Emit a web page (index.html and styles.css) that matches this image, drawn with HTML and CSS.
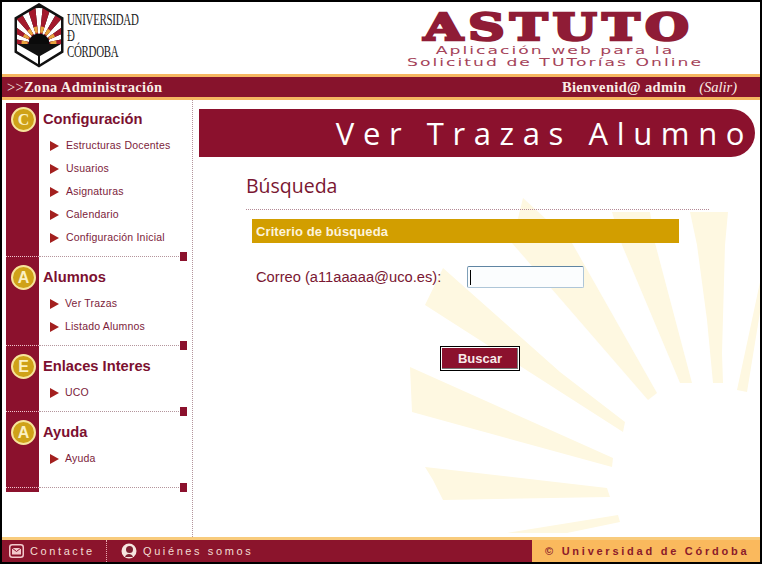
FILE: index.html
```html
<!DOCTYPE html>
<html lang="es">
<head>
<meta charset="utf-8">
<title>ASTUTO - Ver Trazas Alumno</title>
<link rel="stylesheet" href="styles.css">
</head>
<body>
<div class="frame">
  <header class="masthead">
    <div class="uni">
      <svg class="shield" width="50" height="68" viewBox="14 2 50 68" aria-hidden="true">
        <defs><clipPath id="fan"><path d="M39 6L61 19V44L39 44L17 44V19Z"/></clipPath></defs>
        <path d="M39 3L63.500 17.500V52.500L39 67.500L14.500 52.500V17.500Z" fill="#111"/>
        <g clip-path="url(#fan)">
          <circle cx="39" cy="44" r="22" fill="none" stroke="#fff" stroke-width="28" pathLength="120" stroke-dasharray="4 4"/>
          <circle cx="39" cy="44" r="22" fill="none" stroke="#a3192c" stroke-width="28" pathLength="120" stroke-dasharray="4 4" stroke-dashoffset="-4"/>
          <circle cx="39" cy="44" r="14.500" fill="none" stroke="#e8a43c" stroke-width="6" pathLength="120" stroke-dasharray="4 4" stroke-dashoffset="-4"/>
          <circle cx="39" cy="44" r="10.500" fill="#0a0a0a"/>
        </g>
        <path d="M17 44L38 56V64L17 51Z M61 44L40 56V64L61 51Z" fill="#fff"/>
      </svg>
      <div class="uni-name"><span>UNIVERSIDAD</span><span>Ð</span><span>CÓRDOBA</span></div>
    </div>
    <div class="brand">
      <div class="brand-name">ASTUTO</div>
      <div class="brand-sub">Aplicación web para la</div>
      <div class="brand-sub">Solicitud de TUTorías Online</div>
    </div>
  </header>

  <div class="topbar">
    <div class="zone"><span class="zone-mark">&gt;&gt;</span>Zona Administración</div>
    <div class="welcome"><b>Bienvenid@ admin</b><a class="logout" href="#">(Salir)</a></div>
  </div>

  <div class="body">
    <nav class="sidebar">
      <section class="sec first">
        <div class="strip"><span class="badge badge-c">C</span></div>
        <div class="sec-body">
          <h3>Configuración</h3>
          <ul>
            <li>Estructuras Docentes</li>
            <li>Usuarios</li>
            <li>Asignaturas</li>
            <li>Calendario</li>
            <li>Configuración Inicial</li>
          </ul>
        </div>
        <i class="sq"></i>
      </section>
      <section class="sec">
        <div class="strip"><span class="badge">A</span></div>
        <div class="sec-body tight">
          <h3>Alumnos</h3>
          <ul>
            <li>Ver Trazas</li>
            <li>Listado Alumnos</li>
          </ul>
        </div>
        <i class="sq"></i>
      </section>
      <section class="sec">
        <div class="strip"><span class="badge">E</span></div>
        <div class="sec-body tight">
          <h3>Enlaces Interes</h3>
          <ul>
            <li>UCO</li>
          </ul>
        </div>
        <i class="sq"></i>
      </section>
      <section class="sec last">
        <div class="strip"><span class="badge">A</span></div>
        <div class="sec-body tight">
          <h3>Ayuda</h3>
          <ul>
            <li>Ayuda</li>
          </ul>
        </div>
        <i class="sq"></i>
      </section>
      <div class="strip-end"></div>
    </nav>

    <main class="main">
      <svg class="sun" width="567" height="437" viewBox="193 100 567 437" aria-hidden="true">
        <g fill="#fef8e1">
          <path d="M425 467L607 488L610 497L443 500L433 480Z"/>
          <path d="M410 367L613 458L612 467L412 412Z"/>
          <path d="M443 268L425 305L623 432L625 422L560 372Z"/>
          <path d="M523 198L512 243L648 400L657 393L572 243Z"/>
          <path d="M612 212L622 245L680 383L692 383L655 243L650 212Z"/>
          <path d="M690 212L697 245L707 320L713 383L723 383L722 353L725 245L728 212Z"/>
          <path d="M762 273L737 390L747 392L762 300Z"/>
          <path d="M507 533L618 515L620 522L567 533Z"/>
        </g>
      </svg>
      <div class="title-bar"><h1>Ver Trazas Alumno</h1></div>
      <div class="content">
        <h2>Búsqueda</h2>
        <div class="criteria">Criterio de búsqueda</div>
        <form class="form">
          <div class="row">
            <label class="lbl" for="correo">Correo (a11aaaaa@uco.es):</label>
            <span class="field"><input id="correo" class="txt" type="text"><i class="caret"></i></span>
          </div>
          <button class="btn" type="button">Buscar</button>
        </form>
      </div>
    </main>
  </div>

  <footer class="foot">
    <div class="foot-left">
      <a class="foot-link first-link" href="#">
        <svg width="15" height="14" viewBox="0 0 15 14" aria-hidden="true">
          <rect x="0.750" y="0.750" width="13.500" height="12.500" rx="2.500" fill="none" stroke="#f3c9cc" stroke-width="1.500"/>
          <rect x="3" y="4" width="9" height="6.500" fill="#f3c9cc"/>
          <path d="M3 4L7.500 7.500L12 4" fill="none" stroke="#8b112d"/>
        </svg>
        Contacte
      </a>
      <a class="foot-link" href="#">
        <svg width="16" height="16" viewBox="0 0 16 16" aria-hidden="true">
          <circle cx="8" cy="8" r="7.500" fill="#f6e6e0"/>
          <circle cx="8.500" cy="6.500" r="3.500" fill="#7d2233"/>
          <path d="M4 14C5 10 11 10 12 14Z" fill="#7d2233"/>
        </svg>
        Quiénes somos
      </a>
    </div>
    <div class="foot-right">© Universidad de Córdoba</div>
  </footer>
</div>
</body>
</html>
```

FILE: styles.css
```css
* { box-sizing: border-box; }
html, body { margin: 0; padding: 0; background: #fff; }
.frame {
  width: 762px;
  height: 564px;
  border: 2px solid #000;
  display: flex;
  flex-direction: column;
  background: #fff;
  overflow: hidden;
}

/* masthead */
.masthead { height: 72px; flex: none; display: flex; position: relative; }
.uni { display: flex; align-items: flex-start; padding: 0 0 0 12px; width: 383px; flex: none; }
.shield { display: block; flex: none; }
.uni-name {
  display: flex; flex-direction: column;
  margin: 10px 0 0 3px;
  font: 16.500px/16px "Liberation Serif", serif;
  letter-spacing: -.4px;
  color: #222;
  transform: scaleX(.66);
  transform-origin: 0 0;
}
.brand { width: 340px; flex: none; padding-top: 8px; color: #92203a; text-align: center; }
.brand-name {
  font: bold 37px/34px "DejaVu Serif", serif;
  -webkit-text-stroke: 2.500px #8f1c36;
  letter-spacing: 4px;
  transform: translateX(4px) scaleX(1.360);
  height: 34px;
  margin-bottom: 1px;
  color: #8f1c36;
}
.brand-sub {
  font: 11px/12px "DejaVu Sans", sans-serif;
  letter-spacing: 1.300px;
  transform: scaleX(1.560);
  color: #a5445a;
}

/* top bar */
.topbar {
  height: 26px; flex: none;
  background: #87132c;
  border-top: 3px solid #f5b761;
  border-bottom: 3px solid #f5b761;
  display: flex; justify-content: space-between; align-items: center;
  color: #fbeee6;
  font-family: "Liberation Serif", serif;
  font-size: 14.500px;
  padding: 0 23px 0 5px;
}
.zone { font-weight: bold; letter-spacing: .35px; }
.zone-mark { font-weight: normal; }
.welcome b { letter-spacing: .35px; }
.logout { color: #fbeee6; font-style: italic; text-decoration: none; margin-left: 13px; }

/* body */
.body { flex: 1; display: flex; min-height: 0; }
.sidebar {
  width: 191px; flex: none;
  padding: 3px 0 0 4px;
  border-right: 1px dotted #b4959c;
}
.sec { display: flex; position: relative; width: 175px; }
.strip {
  width: 33px; flex: none;
  background: #8b112d;
  padding: 8px 0 0 5px;
  border-bottom: 1px dotted #f2c7cf;
}
.first .strip { padding-top: 4px; }
.strip-end { width: 33px; height: 4px; background: #8b112d; }
.badge {
  display: block; width: 25px; height: 25px;
  border-radius: 50%;
  background: #cfa218;
  border: 2px solid #f7e59b;
  color: #fbf1c4;
  font: bold 16px/21px "Liberation Sans", sans-serif;
  text-align: center;
}
.badge-c { font-family: "Liberation Serif", serif; }
.sec-body {
  flex: 1;
  padding: 8px 0 7px 4px;
  border-bottom: 1px dotted #b4959c;
}
.first .sec-body { padding-top: 4px; }
.last .sec-body { padding-bottom: 17px; }
.sec-body h3 {
  margin: 0; height: 27px;
  font: bold 14.700px/24px "Liberation Sans", sans-serif;
  color: #7c1030;
}
.sec-body ul { list-style: none; margin: 0; padding: 0 0 0 7px; }
.sec-body li {
  height: 23px;
  display: flex; align-items: center; gap: 7px;
  font: 10.500px/23px "Liberation Sans", sans-serif;
  letter-spacing: .2px;
  color: #7c1c3a;
}
.tight li { gap: 6px; }
.sec-body li::before {
  content: "";
  width: 0; height: 0; flex: none;
  border-left: 9px solid #a3201f;
  border-top: 5px solid transparent;
  border-bottom: 5px solid transparent;
}
.sq {
  position: absolute; right: -6px; bottom: -4px;
  width: 7px; height: 9px;
  background: #8b112d;
}

/* main */
.main { flex: 1; position: relative; isolation: isolate; min-width: 0; }
.sun { position: absolute; left: 0; top: 0; z-index: -1; }
.title-bar {
  margin: 9px 5px 0 6px;
  height: 48px;
  background: #8b112d;
  border-radius: 0 24px 24px 0;
  display: flex; justify-content: flex-end; align-items: center;
  padding-right: 2px;
}
.title-bar h1 {
  margin: 0;
  font: normal 31px/48px "Open Sans", sans-serif;
  letter-spacing: 8.600px;
  color: #fff;
}
.content { padding-left: 53px; }
.content h2 {
  margin: 0; width: 463px;
  padding: 17px 0 11px;
  font: normal 19.500px/24px "Open Sans", sans-serif;
  color: #7a1732;
  border-bottom: 1px dotted #b38a96;
}
.criteria {
  margin: 9px 0 0 6px;
  width: 427px; height: 24px;
  padding-left: 4px;
  background: #d29e00;
  color: #fdf3dc;
  font: bold 13px/25px "Liberation Sans", sans-serif;
  letter-spacing: .1px;
}
.form { display: block; }
.row { display: flex; align-items: center; margin: 23px 0 0 10px; height: 22px; }
.lbl {
  width: 211px; flex: none;
  font: 14.700px/22px "Liberation Sans", sans-serif;
  color: #7a1732;
}
.field { position: relative; display: block; width: 117px; height: 22px; }
.txt {
  display: block; width: 100%; height: 100%;
  margin: 0; padding: 0 2px;
  border: 1px solid #aec6d8;
  border-top-color: #5f85a3;
  border-left-color: #7fa0b8;
  border-radius: 2px;
  background: #fbfdfe;
}
.caret { position: absolute; left: 3px; top: 4px; width: 1px; height: 15px; background: #000; }
.btn {
  display: block;
  margin: 58px 0 0 194px;
  width: 80px; height: 25px;
  padding: 0;
  border: 1px solid #000;
  box-shadow: inset 1px 1px 0 #fff, inset -1px -1px 0 #fff, inset -2px -2px 0 #777;
  background: #8b112d;
  color: #f8e9e9;
  font: bold 13px/23px "Liberation Sans", sans-serif;
}

/* footer */
.foot {
  height: 25px; flex: none;
  display: flex;
  border-top: 3px solid #f8cb7c;
  background: #8b142c;
  font-family: "Liberation Sans", sans-serif;
  font-size: 11px;
}
.foot-left { flex: 1; display: flex; align-items: center; padding-left: 7px; color: #f3dcd2; }
.foot-link {
  display: flex; align-items: center; gap: 6px;
  color: inherit; text-decoration: none;
  letter-spacing: 2.600px;
  height: 100%;
}
.first-link {
  width: 98px;
  border-right: 1px dotted #e9a9b0;
  margin-right: 14px;
}
.foot-right {
  width: 228px; flex: none;
  padding-left: 13px;
  background: #fab95d;
  color: #8b1a2a;
  font-weight: bold;
  letter-spacing: 2.750px;
  line-height: 22px;
}
```
